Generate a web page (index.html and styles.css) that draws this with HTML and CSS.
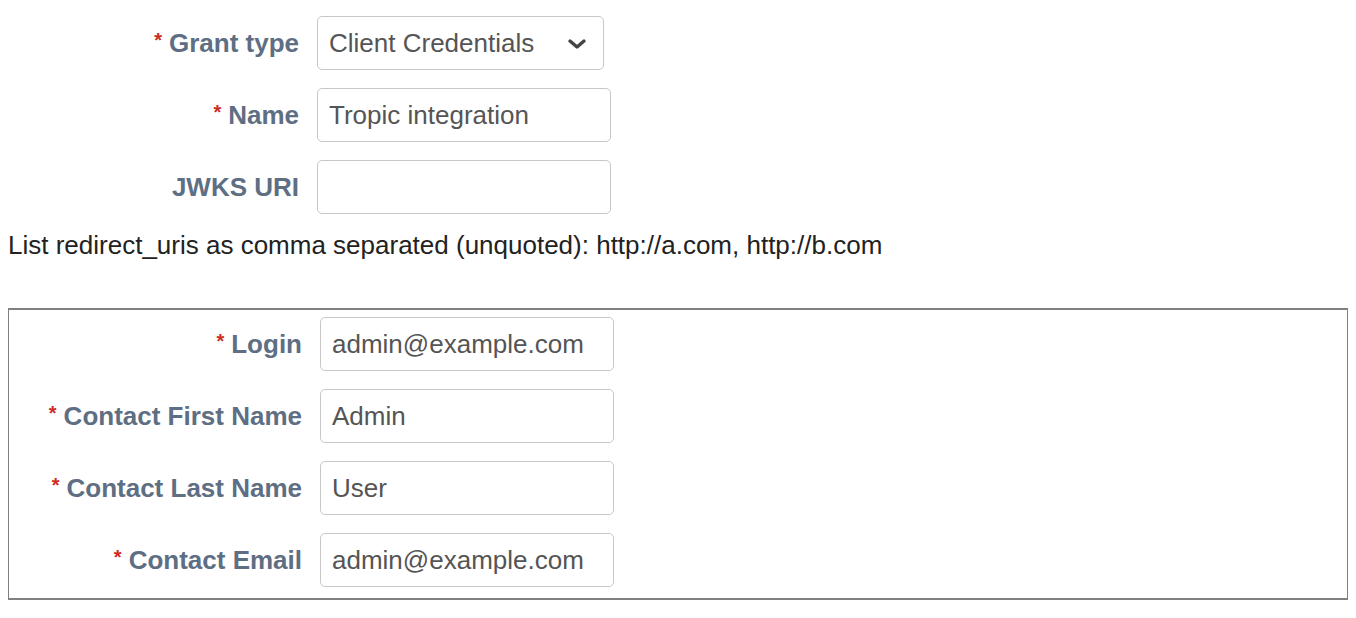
FILE: index.html
```html
<!DOCTYPE html>
<html lang="en">
<head>
    <meta charset="UTF-8">
    <meta name="viewport" content="width=device-width, initial-scale=1.0">
    <title>New client</title>
    <link rel="stylesheet" href="styles.css">
</head>
<body>
    <form class="client-form">
        <div class="row">
            <label class="required" for="grantType">Grant type</label>
            <div class="select-wrap">
                <select id="grantType">
                    <option>Client Credentials</option>
                    <option>Authorization Code</option>
                </select>
                <svg class="chevron" width="20" height="12" viewBox="0 0 20 12">
                    <path d="M3 3 L10 9 L17 3" fill="none" stroke="#444" stroke-width="3.4" stroke-linecap="round" stroke-linejoin="round"/>
                </svg>
            </div>
        </div>
        <div class="row">
            <label class="required" for="name">Name</label>
            <input type="text" id="name" value="Tropic integration">
        </div>
        <div class="row">
            <label for="jwks">JWKS URI</label>
            <input type="text" id="jwks" value="">
        </div>
        <p class="hint">List redirect_uris as comma separated (unquoted): http://a.com, http://b.com</p>

        <div class="contact-box">
            <div class="row">
                <label class="required" for="login">Login</label>
                <input type="text" id="login" value="admin@example.com">
            </div>
            <div class="row">
                <label class="required" for="firstName">Contact First Name</label>
                <input type="text" id="firstName" value="Admin">
            </div>
            <div class="row">
                <label class="required" for="lastName">Contact Last Name</label>
                <input type="text" id="lastName" value="User">
            </div>
            <div class="row">
                <label class="required" for="email">Contact Email</label>
                <input type="text" id="email" value="admin@example.com">
            </div>
        </div>
    </form>
</body>
</html>
```

FILE: styles.css
```css
body {
    margin: 8px;
    font-family: "Liberation Sans", Arial, Helvetica, sans-serif;
    background: #fff;
    color: #222;
}
.client-form {
    margin: 0;
    padding-top: 8px;
}
.row {
    display: flex;
    align-items: center;
    margin-bottom: 18px;
}
.row label {
    width: 309px;
    flex: none;
    text-align: right;
    padding-right: 18px;
    box-sizing: border-box;
    font-size: 26px;
    font-weight: bold;
    color: #5e6e83;
}
.row label.required::before {
    content: "*";
    color: #cc2b22;
    font-size: 20px;
    margin-right: 7px;
    vertical-align: 5px;
}
input[type="text"],
select {
    width: 294px;
    height: 54px;
    padding: 0 11px;
    border: 1px solid #c8c8c8;
    border-radius: 5px;
    box-sizing: border-box;
    font-family: inherit;
    font-size: 26px;
    color: #555;
    background: #fff;
    outline: none;
}
.select-wrap {
    position: relative;
}
select {
    width: 287px;
    appearance: none;
    -webkit-appearance: none;
    padding-right: 40px;
}
.chevron {
    position: absolute;
    right: 17px;
    top: 22px;
    pointer-events: none;
}
.hint {
    margin: 0 0 50px;
    font-size: 26px;
    line-height: 26px;
    color: #222;
}
.contact-box {
    margin: 0 -1px;
    border: 2px solid #808080;
    padding: 7px 0 0 2px;
}
.contact-box .row:last-child {
    margin-bottom: 11px;
}
```
